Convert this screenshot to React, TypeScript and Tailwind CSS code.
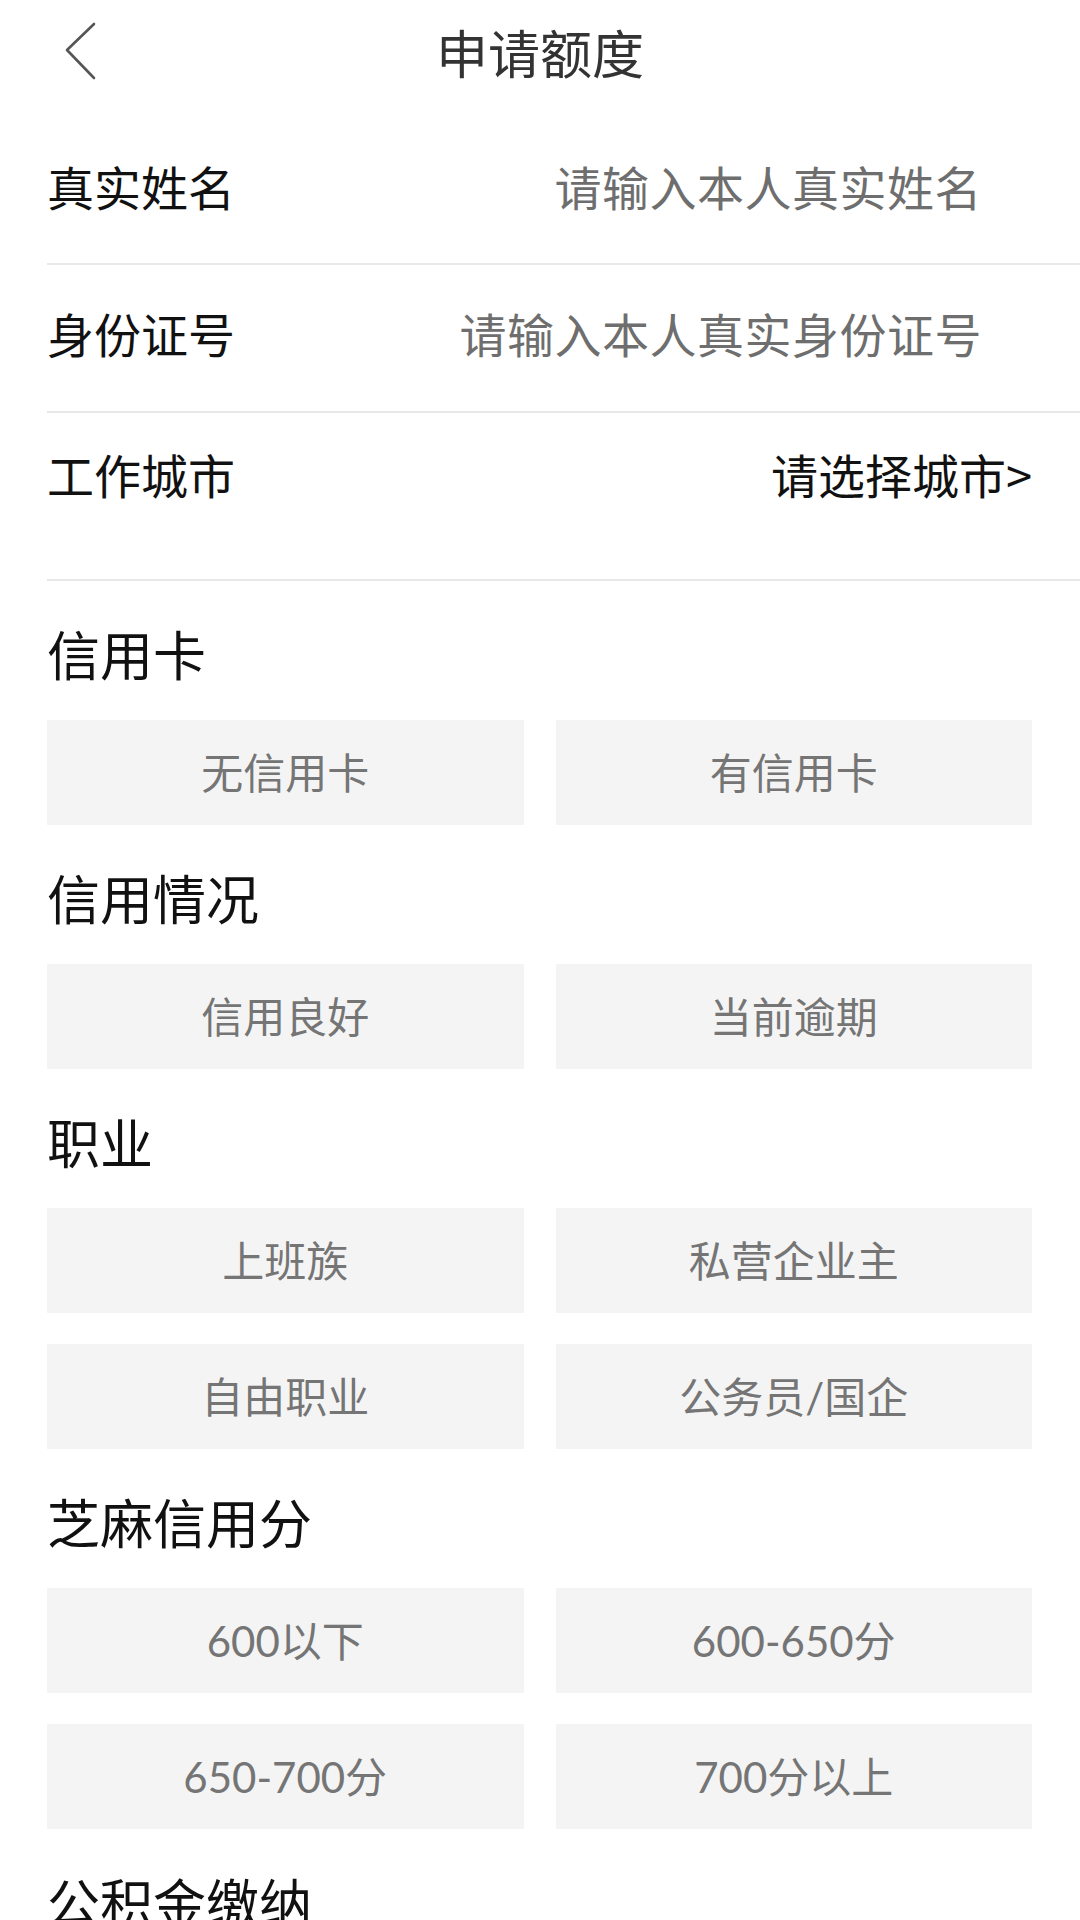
import React from 'react'

const formRows = [
  { label: '真实姓名', value: '请输入本人真实姓名', placeholder: true, pad: 'pt-[56px] pb-[54px]' },
  { label: '身份证号', value: '请输入本人真实身份证号', placeholder: true, pad: 'pt-[44px] pb-[55px]' },
  { label: '工作城市', value: '请选择城市>', placeholder: false, pad: 'pt-[37px] pb-[82px]' },
]

const sections = [
  { title: '信用卡', options: ['无信用卡', '有信用卡'] },
  { title: '信用情况', options: ['信用良好', '当前逾期'] },
  { title: '职业', options: ['上班族', '私营企业主', '自由职业', '公务员/国企'] },
  { title: '芝麻信用分', options: ['600以下', '600-650分', '650-700分', '700分以上'] },
  { title: '公积金缴纳', options: ['有公积金', '无公积金'] },
]

function BackIcon() {
  return (
    <svg width="32" height="58" viewBox="0 0 32 58" fill="none">
      <polyline
        points="29,2 2,28 29,56"
        stroke="#555"
        strokeWidth="2.6"
        strokeLinecap="round"
        strokeLinejoin="round"
      />
    </svg>
  )
}

export default function App() {
  return (
    <div className="w-[1080px] h-[1920px] overflow-hidden bg-white font-['Noto_Sans_CJK_SC',sans-serif]">
      {/* header */}
      <div className="grid grid-cols-[1fr_auto_1fr] items-center h-[106px]">
        <div className="pl-[65px] pb-[4px] flex items-center">
          <BackIcon />
        </div>
        <h1 className="text-[52px] leading-none text-[#333] pb-[2px]">申请额度</h1>
        <div />
      </div>

      {/* form */}
      <div className="ml-[47px]">
        {formRows.map((row) => (
          <div
            key={row.label}
            className={`flex items-center justify-between border-b-2 border-[#e8e8e8] pr-[48px] ${row.pad}`}
          >
            <span className="text-[47px] leading-[47px] text-[#111]">{row.label}</span>
            <span
              className={
                row.placeholder
                  ? 'text-[47px] leading-[47px] text-[#6e6e6e] pr-[50px] tracking-[0.5px]'
                  : 'text-[47px] leading-[47px] text-[#111]'
              }
            >
              {row.value}
            </span>
          </div>
        ))}
      </div>

      {/* option sections */}
      <div className="pl-[47px] pr-[48px]">
        {sections.map((section) => (
          <div key={section.title} className="pt-[46px]">
            <h2 className="text-[53px] leading-none text-[#111]">{section.title}</h2>
            <div className="grid grid-cols-2 gap-x-[32px] gap-y-[31px] mt-[40px]">
              {section.options.map((opt) => (
                <div
                  key={opt}
                  className="h-[105px] bg-[#f4f4f4] flex items-center justify-center text-[42px] leading-none text-[#757575] font-['Lato','Noto_Sans_CJK_SC',sans-serif]"
                >
                  {opt}
                </div>
              ))}
            </div>
          </div>
        ))}
      </div>
    </div>
  )
}
